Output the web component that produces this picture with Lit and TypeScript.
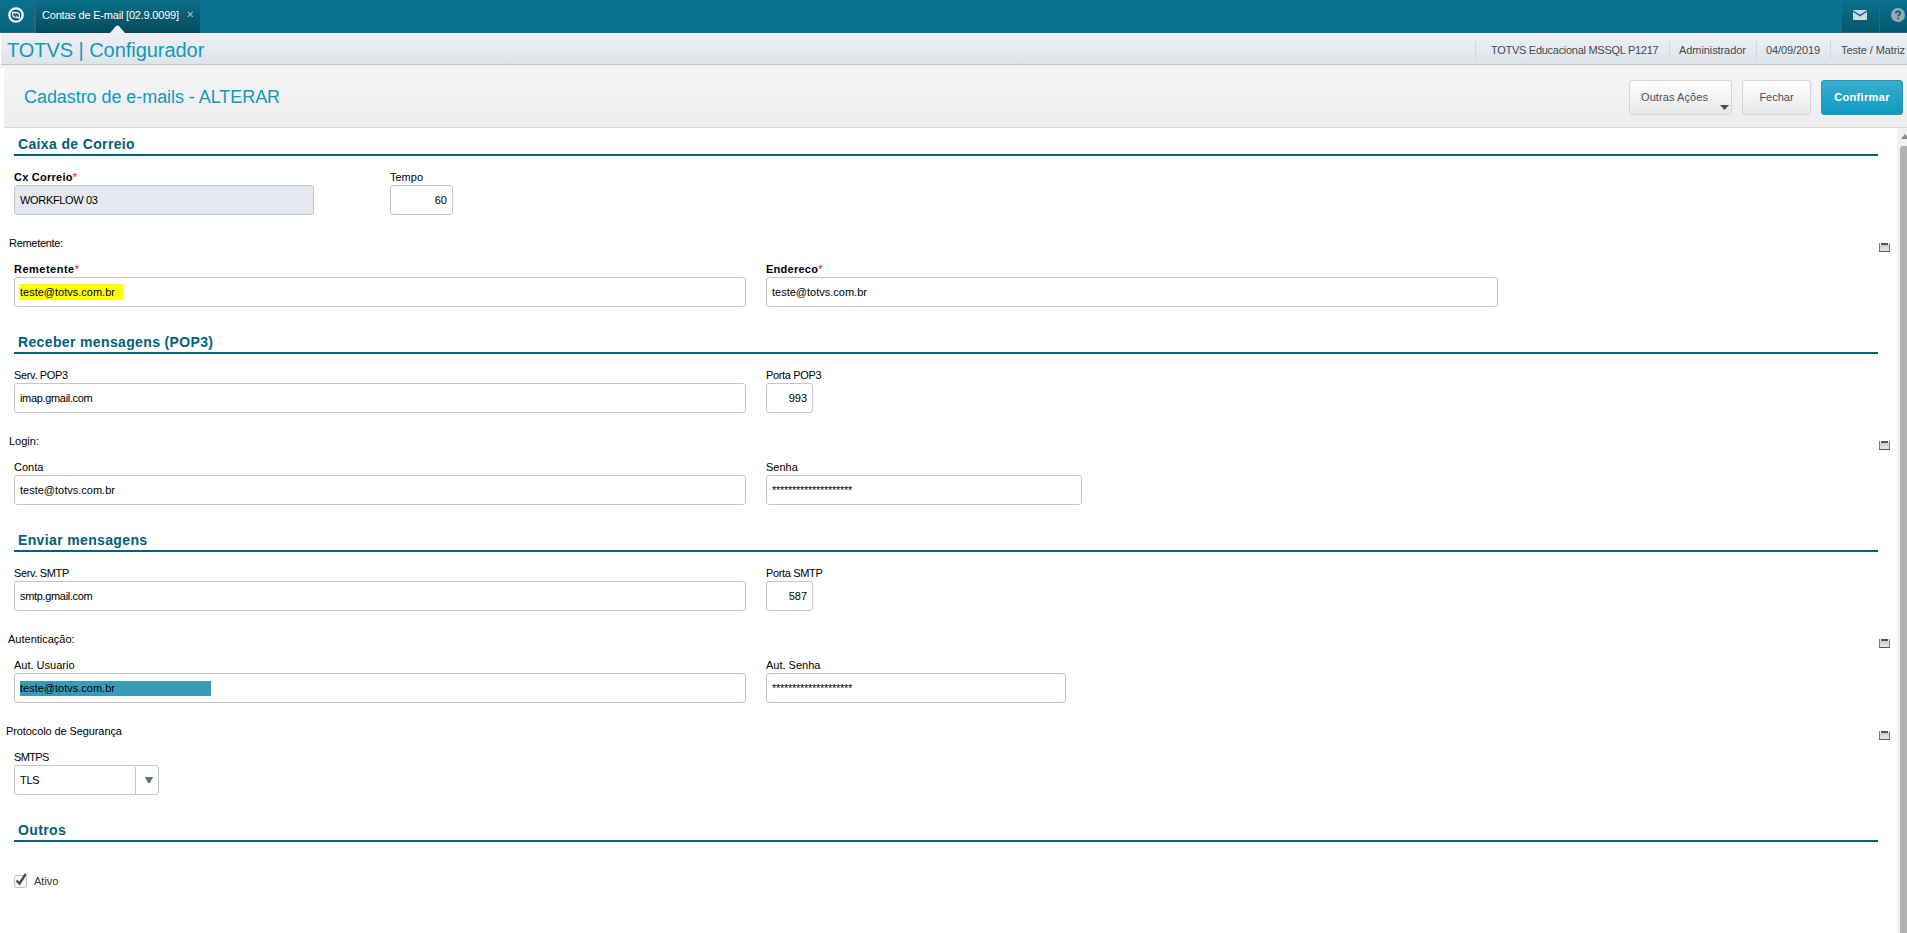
import { LitElement, html, css, nothing } from "lit";
import { customElement, property } from "lit/decorators.js";
import { classMap } from "lit/directives/class-map.js";

const base = css`
  * { box-sizing: border-box; }
  :host { display: block; font-family: "Liberation Sans", Arial, sans-serif; }
`;

@customElement("top-bar")
class TopBar extends LitElement {
  static styles = [base, css`
    .bar { display: flex; height: 33px; background: #0a718e; }
    .cell { height: 32px; display: flex; background: linear-gradient(#09708c, #05586f); }
    .home { width: 35px; border-right: 1px solid #38626d; border-bottom: 1px solid #38626d; padding: 6px 0 0 8px; background: linear-gradient(#0b718d, #07637c); height: 33px; }
    .tab { position: relative; margin-left: 1px; width: 164px; height: 33px; background: linear-gradient(#09708b, #044a5b); color: #fff; font-size: 11px; line-height: 13px; padding: 9px 0 0 6px; display: flex; white-space: nowrap; }
    .name { width: 138px; letter-spacing: -0.2px; }
    .close { margin: 2px 0 0 7px; }
    .notch { position: absolute; left: 74px; bottom: 0; }
    .space { flex: 1; }
    .mail { width: 38px; border-right: 1px solid #38626d; padding: 10px 0 0 11px; }
    .help { width: 27px; padding: 8px 0 0 11px; }
    .mail, .help { border-bottom: 1px solid #2b6474; height: 33px; }
    svg { display: block; flex: none; }
  `];
  render() {
    return html`<div class="bar">
      <div class="cell home"><svg width="17" height="17" viewBox="0 0 17 17">
        <circle cx="8" cy="9" r="6.700" fill="#07607a" stroke="#fff" stroke-width="2.300"/>
        <path d="M4.600 6.200L9.200 6.600Q11.600 7 11.500 9.600L11.300 12L7 11.200Q4.600 10.800 4.600 8.400Z" fill="#07607a" stroke="#fff" stroke-width="1.100"/>
        <path d="M4.600 6.200L9.200 6.600L7.200 8.800ZM11.300 12L7 11.200L9 9.200Z" fill="#fff" opacity=".5"/>
      </svg></div>
      <div class="tab"><span class="name">Contas de E-mail [02.9.0099]</span>
        <svg class="close" width="7" height="7" viewBox="0 0 7 7"><path d="M.8.8l5 5m0-5l-5 5" stroke="#9fbcc4" stroke-width="1.200"/></svg>
        <svg class="notch" width="15" height="8" viewBox="0 0 15 8"><path d="M0 8L6 1Q7.500 0 9 1L15 8Z" fill="#f0f2f4"/></svg>
      </div>
      <div class="space"></div>
      <div class="cell mail"><svg width="14" height="10" viewBox="0 0 14 10">
        <rect width="14" height="10" rx="1" fill="#cfdde2"/><path d="M.3 1.200L7 5.600L13.700 1.200" fill="none" stroke="#07647d" stroke-width="1.300"/></svg></div>
      <div class="cell help"><svg width="14" height="14" viewBox="0 0 14 14">
        <circle cx="7" cy="7" r="7" fill="#9aaab0"/><path d="M4.800 5.400Q4.900 3.400 7 3.400T9.200 5.300Q9.200 6.300 8 7Q7 7.600 7 8.600M7 9.700V11.300" fill="none" stroke="#07607a" stroke-width="1.700"/></svg></div>
    </div>`;
  }
}

@customElement("status-bar")
class StatusBar extends LitElement {
  static styles = [base, css`
    .bar { display: flex; align-items: flex-start; height: 32px; margin-left: 1px; background: linear-gradient(#eef0f3, #dfe4e9); border-bottom: 1px solid #bcc5cb; }
    .name { flex: 1; color: #0e9bc0; font-size: 20px; line-height: 24px; padding: 5px 0 0 6px; letter-spacing: -0.05px; }
    .info { margin-top: 8px; height: 18px; border-left: 1px solid #d2d7db; color: #45494f; font-size: 11px; line-height: 13px; padding: 3px 0 0 9px; white-space: nowrap; }
    .env { width: 194px; padding-left: 15px; letter-spacing: -0.28px; }
    .user { width: 87px; letter-spacing: -0.08px; }
    .date { width: 74px; letter-spacing: -0.1px; }
    .branch { width: 77px; padding-left: 10px; letter-spacing: -0.1px; }
  `];
  render() {
    return html`<div class="bar">
      <div class="name">TOTVS | Configurador</div>
      <div class="info env">TOTVS Educacional MSSQL P1217</div>
      <div class="info user">Administrador</div>
      <div class="info date">04/09/2019</div>
      <div class="info branch">Teste / Matriz</div>
    </div>`;
  }
}

@customElement("action-header")
class ActionHeader extends LitElement {
  static styles = [base, css`
    :host { border-top: 3px solid #f0f0f3; padding-left: 4px; }
    .bar { display: flex; height: 60px; border-bottom: 1px solid #d6d7d9; background: linear-gradient(#f4f6f6, #ecedef); border-top-left-radius: 4px; padding: 12px 4px 0 20px; gap: 10px; }
    .title { flex: 1; color: #0e9bc0; font-size: 18px; line-height: 22px; padding-top: 6px; letter-spacing: -0.06px; }
    .btn { display: flex; height: 35px; border: 1px solid #d4d5d7; border-radius: 3px; background: linear-gradient(#fff, #e8e8e9); color: #4b4f5c; font-size: 11px; line-height: 13px; padding: 10px 0 0; justify-content: center; }
    .more { width: 103px; position: relative; justify-content: flex-start; padding-left: 11px; letter-spacing: .08px; }
    .caret { position: absolute; right: 2px; bottom: 4px; }
    .close { width: 69px; }
    .ok { width: 82px; color: #fff; font-weight: bold; letter-spacing: .35px; border-color: #2497b8; background: linear-gradient(#37aecd, #109bc0); }
  `];
  render() {
    return html`<div class="bar">
      <div class="title">Cadastro de e-mails - ALTERAR</div>
      <div class="btn more">Outras Ações<svg class="caret" width="9" height="5" viewBox="0 0 9 5"><path d="M0 0H9L4.500 5Z" fill="#494d5b"/></svg></div>
      <div class="btn close">Fechar</div>
      <div class="btn ok">Confirmar</div>
    </div>`;
  }
}

@customElement("form-field")
class FormField extends LitElement {
  static styles = [base, css`
    .label { font-size: 11px; line-height: 13px; height: 14px; color: #000; white-space: nowrap; }
    .tight { letter-spacing: -0.35px; }
    .tighter { letter-spacing: -0.65px; }
    .required { font-weight: bold; letter-spacing: .25px; }
    .wide { letter-spacing: .5px; }
    .star { color: #f00; font-weight: normal; }
    .box { display: flex; height: 30px; border: 1px solid #c3c5c7; border-radius: 3px; background: #fff; font-size: 11px; color: #000; line-height: 13px; padding: 8px 5px 0; }
    .disabled { background: #e6e9f1; }
    .number { justify-content: flex-end; }
    .secret .value { letter-spacing: -0.28px; }
    .value { height: 16px; white-space: nowrap; }
    .box .tight { letter-spacing: -0.33px; }
    .yellow { background: #ff0; margin: -2px 0 0 -1px; padding: 2px 8px 0 1px; }
    .teal { background: #389cb6; width: 191px; height: 15px; margin-top: -1px; padding-top: 1px; }
    .combo { padding-right: 0; padding-top: 0; }
    .combo .value { flex: 1; padding-top: 8px; }
    .drop { width: 23px; margin-top: 1px; border-left: 1px solid #c3c5c7; padding: 10px 0 0 9px; }
    .drop svg { display: block; }
  `];
  @property() label = "";
  @property() value = "";
  @property() kind = "text";
  @property() mark = "";
  @property() spacing = "";
  @property({ type: Number }) width = 100;
  @property({ type: Boolean }) required = false;
  render() {
    return html`<div style="width:${this.width}px">
      <div class="label ${this.required ? "required" : ""} ${this.spacing}">${this.label}${this.required ? html`<span class="star">*</span>` : nothing}</div>
      <div class="box ${this.kind}"><span class="value ${this.mark}">${this.value}</span>${this.kind === "combo"
        ? html`<span class="drop"><svg width="8" height="6" viewBox="0 0 8 6"><path d="M0 0H8L5 6H3Z" fill="#66707f"/></svg></span>` : nothing}</div>
    </div>`;
  }
}

interface Field { label: string; value: string; width: number; kind?: string; mark?: string; spacing?: string; required?: boolean }
interface Group { label: string; indent: string; fields: Field[] }
interface Section { title: string; fields: Field[]; groups: Group[]; spread?: boolean }

const secret = "*".repeat(20);
const sections: Section[] = [
  { title: "Caixa de Correio", spread: true,
    fields: [
      { label: "Cx Correio", value: "WORKFLOW 03", width: 300, kind: "disabled", mark: "tight", required: true },
      { label: "Tempo", value: "60", width: 63, kind: "number" }],
    groups: [{ label: "Remetente:", indent: "near tight", fields: [
      { label: "Remetente", value: "teste@totvs.com.br", width: 732, mark: "yellow", spacing: "wide", required: true },
      { label: "Endereco", value: "teste@totvs.com.br", width: 732, required: true }] }] },
  { title: "Receber mensagens (POP3)",
    fields: [
      { label: "Serv. POP3", value: "imap.gmail.com", width: 732, mark: "tight", spacing: "tight" },
      { label: "Porta POP3", value: "993", width: 47, kind: "number", spacing: "tight" }],
    groups: [{ label: "Login:", indent: "near", fields: [
      { label: "Conta", value: "teste@totvs.com.br", width: 732 },
      { label: "Senha", value: secret, width: 316, kind: "secret" }] }] },
  { title: "Enviar mensagens",
    fields: [
      { label: "Serv. SMTP", value: "smtp.gmail.com", width: 732, mark: "tight", spacing: "tight" },
      { label: "Porta SMTP", value: "587", width: 47, kind: "number", spacing: "tight" }],
    groups: [
      { label: "Autenticação:", indent: "mid", fields: [
        { label: "Aut. Usuario", value: "teste@totvs.com.br", width: 732, mark: "teal" },
        { label: "Aut. Senha", value: secret, width: 300, kind: "secret" }] },
      { label: "Protocolo de Segurança", indent: "far", fields: [
        { label: "SMTPS", value: "TLS", width: 145, kind: "combo", mark: "tight", spacing: "tighter" }] }] },
];

@customElement("app-root")
class AppRoot extends LitElement {
  static styles = [base, css`
    :host { height: 933px; overflow: hidden; background: #fff; display: flex; flex-direction: column; }
    .body { flex: 1; display: flex; min-height: 0; }
    .form { flex: 1; color: #000; font-size: 11px; line-height: 13px; }
    .title { margin: 0 19px 0 14px; height: 28px; padding: 8px 0 0 4px; border-bottom: 2px solid #00617a; color: #00617a; font-size: 14px; font-weight: bold; line-height: 16px; letter-spacing: .36px; }
    .fields { display: flex; gap: 20px; padding: 15px 0 0 14px; }
    .spread { gap: 76px; }
    .group { display: flex; height: 47px; padding-top: 22px; justify-content: space-between; }
    .near { padding-left: 9px; }
    .tight { letter-spacing: -0.3px; }
    .mid { padding-left: 8px; }
    .far { padding-left: 6px; letter-spacing: -0.1px; }
    .group + .fields { padding-top: 1px; }
    .gap { height: 19px; }
    .tray { margin: 6px 7px 0 0; display: block; }
    .check { display: flex; gap: 7px; padding: 31px 0 0 14px; color: #333; }
    .check svg { display: block; }
    .check span { padding-top: 2px; }
    .scroll { width: 10px; background: #f1f1f1; display: flex; flex-direction: column; padding-left: 3px; overflow: hidden; }
    .scroll svg { display: block; margin: 6px 0 7px 1px; flex: none; }
    .thumb { flex: 1; background: #b1b1b1; border-top-left-radius: 3px; }
  `];
  private row(fields: Field[], spread = false) {
    return html`<div class=${classMap({ fields: true, spread })}>${fields.map(f => html`<form-field
      .label=${f.label} .value=${f.value} .width=${f.width} .kind=${f.kind ?? "text"} .mark=${f.mark ?? ""} .spacing=${f.spacing ?? ""} .required=${!!f.required}></form-field>`)}</div>`;
  }
  render() {
    return html`
      <top-bar></top-bar>
      <status-bar></status-bar>
      <action-header></action-header>
      <div class="body">
        <div class="form">
          ${sections.map(s => html`
            <div class="title">${s.title}</div>
            ${this.row(s.fields, s.spread)}
            ${s.groups.map(g => html`<div class="group"><span class=${g.indent}>${g.label}</span>
              <svg class="tray" width="11" height="9" viewBox="0 0 11 9">
                <defs><linearGradient id="g" x2="0" y2="1"><stop stop-color="#c5c5c8"/><stop offset="1" stop-color="#e6e6e2"/></linearGradient></defs>
                <rect x="1" y="0" width="9" height="8" fill="url(#g)"/>
                <path d="M.5 0V8.500H10.500V0" fill="none" stroke="#7c7c92"/><path d="M0 8.500H11" stroke="#55556f"/>
                <path d="M1.500 0V2M9.500 0V2" stroke="#fff"/><rect x="2" y="0" width="7" height="2" fill="#51516e"/></svg></div>
              ${this.row(g.fields)}`)}
            <div class="gap"></div>`)}
          <div class="title">Outros</div>
          <div class="check"><svg width="13" height="15" viewBox="0 0 13 15">
            <rect x=".5" y="2.500" width="12" height="12" rx="2" fill="#f8f8f8" stroke="#c0c1c4"/>
            <path d="M2.500 7.500L5.500 10.500L11.800 1" fill="none" stroke="#454c60" stroke-width="2.400"/></svg><span>Ativo</span></div>
        </div>
        <div class="scroll">
          <svg width="8" height="5" viewBox="0 0 8 5"><path d="M0 5L4 0L8 5Z" fill="#8a8a8a"/></svg>
          <div class="thumb"></div>
        </div>
      </div>`;
  }
}
